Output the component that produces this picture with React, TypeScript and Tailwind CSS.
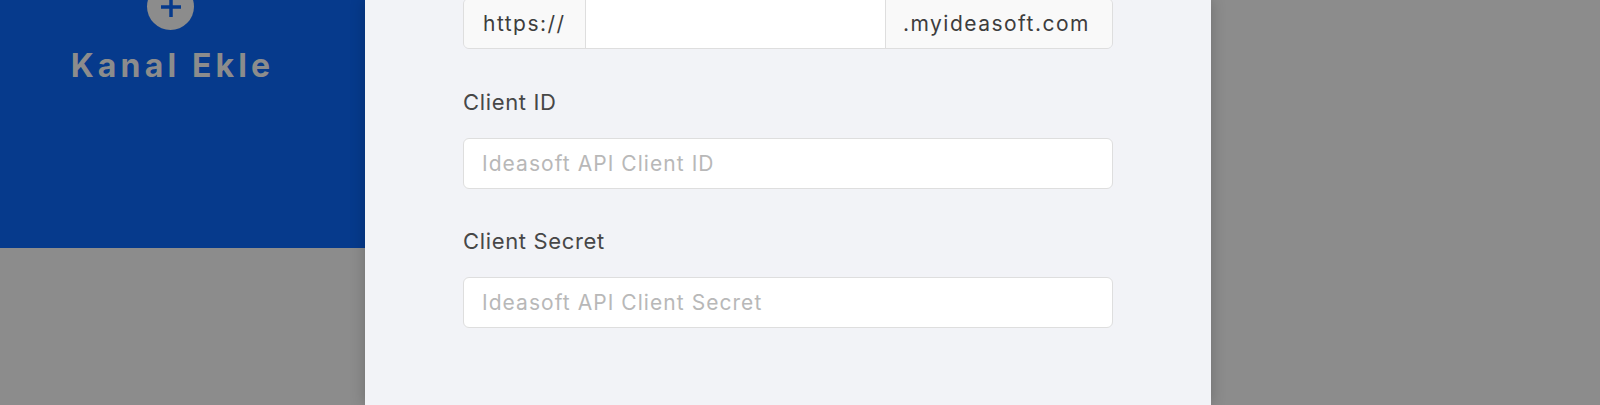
export default function App() {
  return (
    <div
      className="flex h-[405px] w-[1600px] overflow-hidden bg-[#8c8c8c]"
      style={{ fontFamily: "Inter, 'Noto Sans', sans-serif" }}
    >
      {/* Dimmed channel card */}
      <div className="w-[365px] shrink-0">
        <div className="flex h-[248px] flex-col items-center bg-[#063a8c] pr-[24px]">
          <div className="-mt-[17px] flex h-[47px] w-[47px] items-center justify-center rounded-full bg-[#8c8c8c]">
            <svg width="20" height="20" viewBox="0 0 20 20">
              <path d="M10 0v20M0 10h20" stroke="#063a8c" strokeWidth="3.5" />
            </svg>
          </div>
          <span className="mt-[16px] pl-[4px] text-[32px] leading-[40px] font-bold tracking-[0.13em] text-[#8c8c8c]">
            Kanal Ekle
          </span>
        </div>
      </div>

      {/* Modal */}
      <div className="h-full w-[846px] shrink-0 bg-[#f2f3f7] px-[98px] shadow-[0_0_14px_rgba(0,0,0,0.22)]">
        <div className="-mt-[2px] flex h-[51px] overflow-hidden rounded-[6px] border border-[#dedede] text-[21px] tracking-[0.07em] text-[#3d3d3d]">
          <div className="flex w-[122px] items-center border-r border-[#dedede] bg-[#f9f9f9] pl-[19px]">
            https://
          </div>
          <input className="min-w-0 flex-1 bg-white px-[18px] outline-none" />
          <div className="flex w-[227px] items-center border-l border-[#dedede] bg-[#f9f9f9] pl-[17px]">
            .myideasoft.com
          </div>
        </div>

        <label className="mt-[37px] mb-[20px] block h-[32px] text-[22px] leading-[32px] tracking-[0.03em] text-[#474747]">
          Client ID
        </label>
        <input
          placeholder="Ideasoft API Client ID"
          className="block h-[51px] w-full rounded-[6px] border border-[#dedede] bg-white px-[18px] text-[21px] tracking-[0.05em] text-[#3d3d3d] outline-none placeholder:text-[#b8b8b8]"
        />

        <label className="mt-[36px] mb-[20px] block h-[32px] text-[22px] leading-[32px] tracking-[0.03em] text-[#474747]">
          Client Secret
        </label>
        <input
          placeholder="Ideasoft API Client Secret"
          className="block h-[51px] w-full rounded-[6px] border border-[#dedede] bg-white px-[18px] text-[21px] tracking-[0.05em] text-[#3d3d3d] outline-none placeholder:text-[#b8b8b8]"
        />
      </div>
    </div>
  );
}
